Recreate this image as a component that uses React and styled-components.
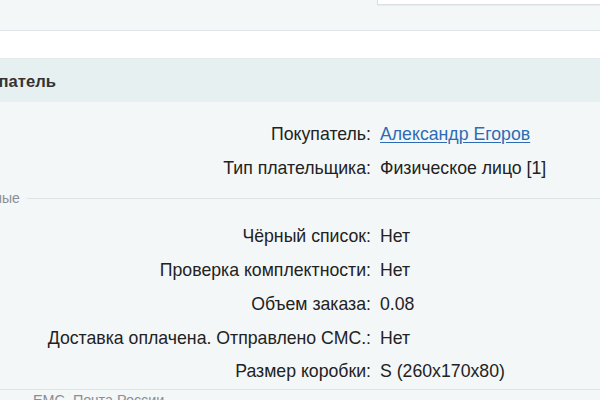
import styled, { createGlobalStyle } from 'styled-components';

const GlobalStyle = createGlobalStyle`
   html, body {
      margin: 0;
      padding: 0;
      background: #f4f7f8;
      overflow: hidden;
      font-family: "Liberation Sans", Arial, sans-serif;
   }
`;

// the screenshot is a crop of a wider page, so the page runs off to the left
const Page = styled.div`
   margin-left: -100px;
   width: 700px;
`;

const TopBar = styled.div`
   height: 30px;
   display: flex;
   justify-content: flex-end;
   align-items: flex-start;
   background: #f4f7f8;
   border-bottom: 1px solid #dfe5e8;
`;

const SearchBox = styled.div`
   width: 222px;
   height: 4px;
   background: #fff;
   border-left: 1px solid #dcdfe1;
   border-bottom: 1px solid #dcdfe1;
   box-shadow: 0 1px 1px rgba(0, 0, 0, 0.04);
`;

const TabStrip = styled.div`
   height: 27px;
   background: #fff;
`;

const PanelHeader = styled.div`
   height: 43px;
   line-height: 45px;
   padding-left: 59px;
   background: #e7f0f1;
   border-top: 1px solid #e3eaec;
   font-size: 16.6px;
   font-weight: 700;
   color: #333;
`;

const PanelBody = styled.div`
   padding-top: 15px;
   background: #f4f7f8;
`;

const Props = styled.div`
   display: grid;
   grid-template-columns: 471px 1fr;
   column-gap: 9px;
   grid-auto-rows: ${(p) => (p.$tight ? '33.75px' : '34px')};
   align-items: center;
   font-size: 17.7px;
   color: #222;
`;

const Label = styled.div`
   text-align: right;
   white-space: nowrap;
`;

const Value = styled.div`
   white-space: nowrap;
`;

const Link = styled.a`
   color: #2d6cb5;
   text-decoration: underline;
   text-underline-offset: 2px;
`;

const Divider = styled.div`
   height: 35px;
   display: flex;
   align-items: flex-start;
   gap: 7px;
   padding-left: 9px;
   font-size: 14px;
   color: #8a8f93;

   span {
      line-height: 26px;
   }

   &::after {
      content: '';
      flex: 1;
      margin-top: 13px;
      border-top: 1px solid #dde3e6;
   }
`;

const NextPanel = styled.div`
   height: 20px;
   border-top: 1px solid #dde3e6;
   padding: 2px 0 0 133px;
   font-size: 14.4px;
   color: #8a8f93;
`;

const buyer = [
   { label: 'Покупатель', value: 'Александр Егоров', link: true },
   { label: 'Тип плательщика', value: 'Физическое лицо [1]' },
];

const extra = [
   { label: 'Чёрный список', value: 'Нет' },
   { label: 'Проверка комплектности', value: 'Нет' },
   { label: 'Объем заказа', value: '0.08' },
   { label: 'Доставка оплачена. Отправлено СМС.', value: 'Нет' },
   { label: 'Размер коробки', value: 'S (260x170x80)' },
];

function PropList({ items, tight }) {
   return (
      <Props $tight={tight}>
         {items.map((item) => [
            <Label key={item.label + '-l'}>{item.label}:</Label>,
            <Value key={item.label + '-v'}>
               {item.link ? <Link href="#">{item.value}</Link> : item.value}
            </Value>,
         ])}
      </Props>
   );
}

export default function App() {
   return (
      <Page>
         <GlobalStyle />
         <TopBar>
            <SearchBox />
         </TopBar>
         <TabStrip />

         <PanelHeader>Покупатель</PanelHeader>
         <PanelBody>
            <PropList items={buyer} />
            <Divider>
               <span>Дополнительные</span>
            </Divider>
            <PropList items={extra} tight />
         </PanelBody>

         <NextPanel>ЕМС. Почта России</NextPanel>
      </Page>
   );
}
